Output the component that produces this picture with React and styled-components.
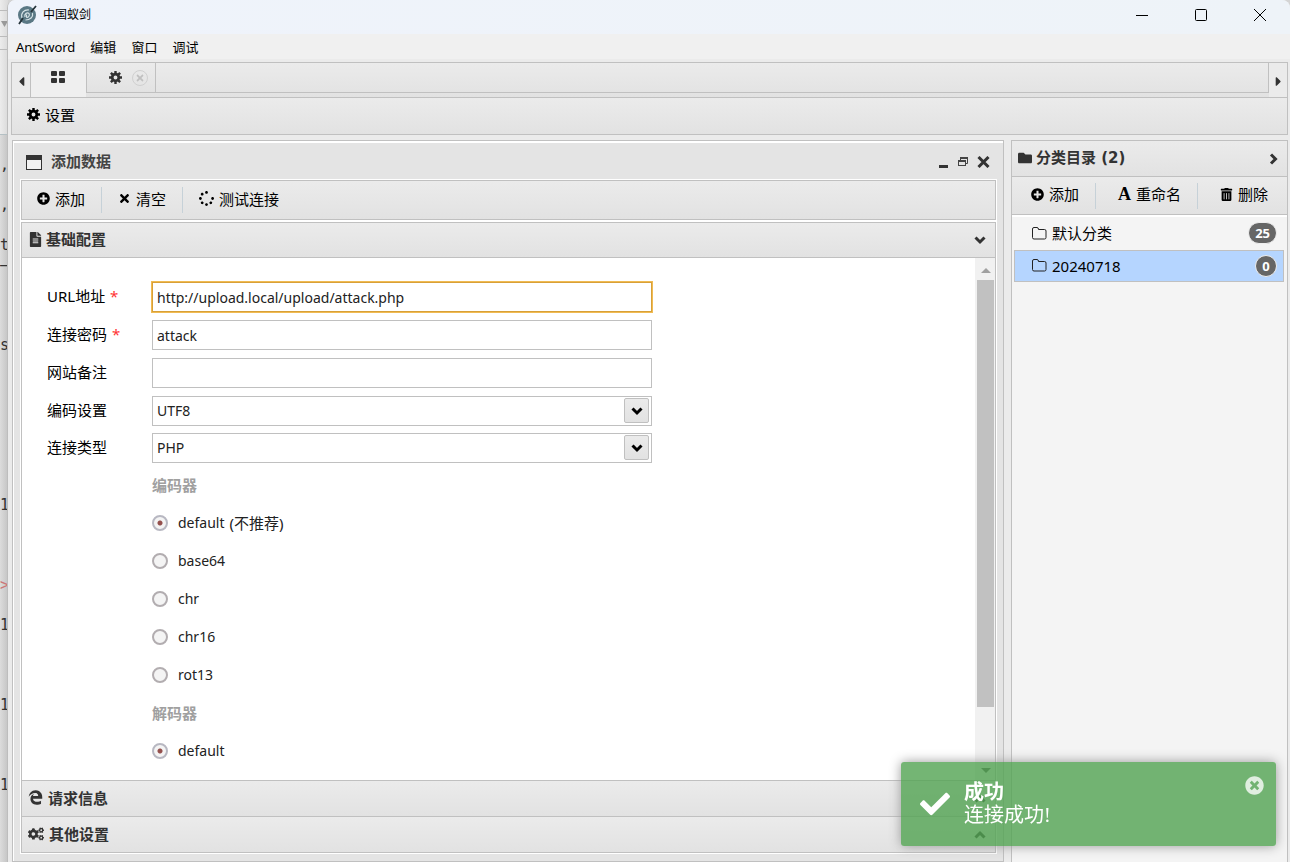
import React from "react";
import styled, { createGlobalStyle } from "styled-components";
import {
    FaCogs,
    FaPlusCircle,
    FaTimes,
    FaSpinner,
    FaFileAlt,
    FaEdgeLegacy,
    FaFolder,
    FaTrashAlt,
    FaCheck,
    FaTimesCircle,
    FaCaretLeft,
    FaCaretRight,
} from "react-icons/fa";

const line = "#c0c0c0";
const shade = "linear-gradient(#ebebeb, #e2e2e2)";

const GlobalStyle = createGlobalStyle`
    * {
        box-sizing: border-box;
    }
    body {
        margin: 0;
        font-family: "Noto Sans", "Noto Sans CJK SC", sans-serif;
        font-size: 15px;
        line-height: 20px;
        color: #000000;
    }
    button, input, select {
        font: inherit;
        color: inherit;
        margin: 0;
    }
    button {
        padding: 0;
        border: 0;
        background: none;
        display: flex;
        align-items: center;
        white-space: nowrap;
    }
    svg {
        flex: none;
    }
`;

const Screen = styled.div`
    min-height: 100vh;
    display: flex;
    background: #d4d4d4;
`;

const Behind = styled.div`
    flex: none;
    width: 8px;
    margin-right: -1px;
    overflow: hidden;
    background: linear-gradient(to right, #dcdcdc, #c4c4c4);
`;

const BehindTop = styled.div`
    height: 135px;
    border-bottom: 1px solid #b4c0c4;
    background: linear-gradient(to right, #ececec, #dadada);
`;

const BehindBar = styled.div`
    height: ${(props) => props.$height}px;
    display: flex;
    align-items: center;
    border-bottom: 1px solid #bbbbbb;
`;

const BehindText = styled.pre`
    margin: 0;
    padding-top: 20px;
    font: 15px/20px "DejaVu Sans Mono", monospace;
    color: #333333;

    i {
        color: #cc7777;
        font-style: normal;
    }
`;

const Main = styled.div`
    flex: 1;
    min-width: 0;
    display: flex;
    flex-direction: column;
    border-left: 1px solid #bdbdbd;
    background: #ebebeb;
    border-radius: 8px 8px 0 0;
    overflow: hidden;
`;

const TitleBar = styled.header`
    height: 34px;
    padding: 0 23px 4px 10px;
    display: flex;
    align-items: center;
    gap: 5px;
    background: linear-gradient(to right, #eff3fb, #eef3f8);
    font-size: 12px;
`;

const Controls = styled.div`
    margin-left: auto;
    display: flex;
    gap: 45px;
`;

const Menu = styled.nav`
    height: 25px;
    padding: 0 8px;
    display: flex;
    align-items: center;
    gap: 15px;
    background: #f0f0f0;
    font-size: 13px;
`;

const Body = styled.div`
    flex: 1;
    padding: 3px 2px 2px 3px;
    display: flex;
    flex-direction: column;
`;

const Tabs = styled.div`
    height: 35px;
    display: flex;
    border: 1px solid ${line};
    border-bottom: 0;
    background: ${shade};
    color: #333333;
`;

const Arrow = styled.button`
    width: 18px;
    padding-top: 3px;
    justify-content: center;
    background: #ebebeb;
`;

const Tab = styled.div`
    width: ${(props) => props.$width}px;
    height: ${(props) => (props.$active ? 34 : 30)}px;
    padding: ${(props) => (props.$active ? "0 2px 6px 0" : "0 0 0 14px")};
    display: flex;
    align-items: center;
    justify-content: center;
    gap: 10px;
    border: solid ${line};
    border-width: 0 0 ${(props) => (props.$active ? 0 : 1)}px 1px;
    background: ${(props) => (props.$active ? "#efefef" : shade)};
`;

const TabClose = styled.button`
    width: 16px;
    height: 16px;
    justify-content: center;
    border: 1px solid #d0d0d0;
    border-radius: 50%;
    color: #c0c0c0;
`;

const TabRest = styled.div`
    flex: 1;
    height: 30px;
    border: solid ${line};
    border-width: 0 1px 1px 1px;
`;

const Bar = styled.div`
    height: 38px;
    padding: 0 15px;
    display: flex;
    align-items: center;
    border: 1px solid ${line};
    background: ${shade};
`;

const BarButton = styled.button`
    gap: 5px;
    padding-bottom: 3px;
`;

const Columns = styled.div`
    flex: 1;
    margin: 5px 0 0 1px;
    display: flex;
    gap: 7px;
`;

const Dialog = styled.section`
    flex: 1;
    min-width: 0;
    padding: 0 7px 8px 8px;
    display: flex;
    flex-direction: column;
    border: 1px solid ${line};
    box-shadow: inset 1px 1px #ffffff, inset 0 2px #ffffff;
    background: #e4e4e4;
`;

const DialogHead = styled.header`
    height: 39px;
    padding: 1px 6px 0 5px;
    display: flex;
    align-items: center;
    gap: 9px;
    color: #444444;
    font-weight: bold;
`;

const DialogControls = styled.div`
    margin-left: auto;
    display: flex;
    align-items: center;
    gap: 8px;
    padding-top: 2px;
`;

const DialogBar = styled.div`
    height: 40px;
    padding: 0 15px;
    display: flex;
    align-items: center;
    border: 1px solid ${line};
    outline: 1px solid #ffffff;
    background: ${shade};
`;

const Divider = styled.span`
    width: 1px;
    height: 26px;
    margin: 0 ${(props) => props.$after || 16}px 0 16px;
    background: #c6d1d8;
`;

const Accordion = styled.div`
    flex: 1;
    margin-top: 2px;
    display: flex;
    flex-direction: column;
    border: 1px solid ${line};
    outline: 1px solid #ffffff;
`;

const Section = styled.button`
    width: 100%;
    height: ${(props) => props.$height}px;
    padding: 0 9px 2px 6px;
    gap: ${(props) => (props.$open ? 3 : 5)}px;
    border: solid ${line};
    border-width: ${(props) => (props.$open ? "0 0 1px" : "1px 0 0")};
    background: ${shade};
    color: #333333;
    font-weight: bold;

    svg:last-child {
        margin: 2px 0 0 auto;
    }
`;

const Content = styled.div`
    flex: 1;
    display: flex;
    background: #ffffff;
`;

const Form = styled.form`
    flex: 1;
    padding: 20px 25px 10px;
`;

const Field = styled.div`
    height: ${(props) => props.$height || 38}px;
    display: grid;
    grid-template-columns: 105px 500px;
    align-items: center;

    label {
        padding-bottom: 2px;
    }
`;

const Required = styled.span`
    margin-left: 1px;
    color: #ff3333;
`;

const TextBox = styled.input`
    width: 100%;
    height: 30px;
    padding: 0 4px;
    border: 1px solid ${line};
    outline: ${(props) => (props.$focus ? "1px solid #f0bb53" : "none")};
    border-color: ${(props) => (props.$focus ? "#d8a038" : line)};
    border-radius: 0;
    background: #ffffff;
    color: #222222;
    font-size: 14px;
`;

const SelectBox = styled.div`
    display: grid;
    align-items: center;

    > * {
        grid-area: 1 / 1;
    }
`;

const Select = styled.select`
    width: 100%;
    height: 30px;
    padding: 0 4px;
    appearance: none;
    border: 1px solid ${line};
    border-radius: 0;
    background: #ffffff;
    color: #222222;
    font-size: 14px;
`;

const SelectArrow = styled.span`
    width: 25px;
    height: 25px;
    margin-right: 3px;
    justify-self: end;
    display: flex;
    align-items: center;
    justify-content: center;
    border: 1px solid ${line};
    border-radius: 2px;
    background: ${shade};
    pointer-events: none;
`;

const GroupTitle = styled.div`
    height: 38px;
    padding-left: 105px;
    display: flex;
    align-items: center;
    color: #a0a0a0;
    font-weight: bold;
`;

const Option = styled.label`
    height: 38px;
    padding-left: 105px;
    display: flex;
    align-items: center;
    gap: 10px;
    color: #222222;
    font-size: 14px;
`;

const Note = styled.span`
    margin-left: -5px;
    font-size: 15px;
`;

const Radio = styled.input`
    width: 16px;
    height: 16px;
    appearance: none;
    border: 2px solid #b2adb0;
    border-radius: 50%;
    background: #f4f4f4;

    &:checked {
        border-color: #b8b8c2;
        background: radial-gradient(circle, #94504d 2px, #f4f4f4 3px);
    }
`;

const Scroll = styled.div`
    width: 20px;
    padding: 0 1px 0 2px;
    display: flex;
    flex-direction: column;
    align-items: center;
    background: #f1f1f1;
    color: #a0a0a0;
`;

const Thumb = styled.div`
    width: 100%;
    flex: 427;
    background: #c1c1c1;
`;

const ScrollRest = styled.div`
    flex: 51;
`;

const ScrollButton = styled.span`
    height: 22px;
    padding-top: 2px;
    display: flex;
    align-items: center;
`;

const Side = styled.aside`
    width: 277px;
    display: flex;
    flex-direction: column;
    border: solid ${line};
    border-width: 1px 1px 0;
    background: #f4f4f4;
`;

const SideHead = styled.header`
    height: 36px;
    padding: 0 8px 2px 6px;
    display: flex;
    align-items: center;
    gap: 4px;
    border-bottom: 1px solid ${line};
    background: ${shade};
    color: #333333;
    font-family: "DejaVu Sans", "Noto Sans CJK SC", sans-serif;
    font-weight: bold;

    svg:last-child {
        margin: 3px 0 0 auto;
    }
`;

const SideBar = styled.div`
    height: 38px;
    padding: 0 19px;
    display: flex;
    align-items: center;
    border-bottom: 1px solid ${line};
    background: ${shade};
`;

const LetterIcon = styled.span`
    font: bold 18px/20px "Liberation Serif", serif;
`;

const List = styled.ul`
    margin: 0;
    padding: 0 3px 0 2px;
    border-top: 2px solid #ffffff;
    list-style: none;
`;

const Item = styled.li`
    height: ${(props) => (props.$selected ? 32 : 33)}px;
    padding: 0 6px 1px 17px;
    display: flex;
    align-items: center;
    gap: 5px;
    border: 1px solid ${(props) => (props.$selected ? line : "transparent")};
    background: ${(props) => (props.$selected ? "#b5d5ff" : "transparent")};
`;

const Badge = styled.span`
    margin-left: auto;
    min-width: 22px;
    padding: 0 6px;
    border: 1px solid #eeeeee;
    border-radius: 11px;
    background: #666666;
    color: #ffffff;
    font-size: 13px;
    font-weight: bold;
    text-align: center;
`;

const Toast = styled.div`
    position: fixed;
    right: 14px;
    bottom: 16px;
    width: 375px;
    height: 84px;
    padding: 0 12px 0 19px;
    display: flex;
    align-items: center;
    gap: 14px;
    border-radius: 3px;
    background: rgba(81, 163, 81, 0.8);
    box-shadow: 0 0 12px #999999;
    color: #ffffff;
    font: 20px/23px "Liberation Serif", "Noto Sans CJK SC", serif;
`;

const ToastClose = styled.button`
    align-self: flex-start;
    margin: 14px 0 0 auto;
    color: #e0eee0;
`;

const Logo = () => (
    <svg width="20" height="20" viewBox="0 0 20 20">
        <circle cx="9" cy="10" r="9" fill="#5a7884" />
        <g fill="none" stroke="#d5e2e5" strokeWidth="1.2">
            <path d="M4 13C2.500 8 6 4.500 11 5M14.500 8c1 4-2.500 7-7 7" />
            <path d="M7 12C6 9 9 7 11 8.500C12.500 11 9.500 13 8.500 12V9.500" />
        </g>
        <path d="M1 19L5 13M13 7L18 1" stroke="#26343a" strokeWidth="1.800" />
    </svg>
);

const Gear = () => (
    <svg width="13" height="13" viewBox="0 0 14 14" stroke="currentColor" fill="none">
        <circle cx="7" cy="7" r="3.600" strokeWidth="3" />
        <path d="M7 0v3M7 11v3M0 7h3M11 7h3M2 2l2 2M10 10l2 2M12 2l-2 2M4 10l-2 2" strokeWidth="2.600" />
    </svg>
);

const Grid = () => (
    <svg width="14" height="12" fill="currentColor">
        <rect width="6" height="5" rx="1" />
        <rect x="8" width="6" height="5" rx="1" />
        <rect y="7" width="6" height="5" rx="1" />
        <rect x="8" y="7" width="6" height="5" rx="1" />
    </svg>
);

const chevrons = {
    down: "M1.500 3.500L6 8L10.500 3.500",
    up: "M1.500 8.500L6 4L10.500 8.500",
    right: "M4 1.500L8.500 6L4 10.500",
};

const Chevron = ({ to }) => (
    <svg width="12" height="12" fill="none" stroke="currentColor" strokeWidth="3">
        <path d={chevrons[to]} />
    </svg>
);

const FolderOutline = () => (
    <svg width="15" height="13" fill="none" stroke="#222222">
        <path d="M0.500 2Q0.500 0.500 2 0.500H5Q6.500 0.500 6.500 2.500H12.500Q14 2.500 14 4V10.500Q14 12 12.500 12H2Q0.500 12 0.500 10.500Z" />
    </svg>
);

const DialogIcon = () => (
    <svg width="16" height="18" viewBox="0 0 16 18">
        <rect x="0.5" y="3.5" width="15" height="14" fill="#f2f2f2" stroke="#333333" />
        <rect y="3" width="16" height="5" fill="#333333" />
    </svg>
);

const items = [
    { name: "默认分类", count: 25 },
    { name: "20240718", count: 0, selected: true },
];

const encoders = [
    { name: "default", note: "(不推荐)" },
    { name: "base64" },
    { name: "chr" },
    { name: "chr16" },
    { name: "rot13" },
];

export default function App() {
    return (
        <Screen>
            <GlobalStyle />
            <Behind>
                <BehindTop>
                    <BehindBar $height={11} />
                    <BehindBar $height={26}>
                        <svg width="8" height="8" fill="#999999"><path d="M1 1H8L4.500 7Z" /></svg>
                    </BehindBar>
                    <BehindBar $height={13} />
                </BehindTop>
                <BehindText>
                    {",\n\n,\n\nt\n—\n\n\n\ns" + "\n".repeat(8) + "1" + "\n".repeat(4)}
                    <i>&gt;</i>
                    {"\n\n1\n\n\n\n1\n\n\n\n1"}
                </BehindText>
            </Behind>
            <Main>
                <TitleBar>
                    <Logo />
                    中国蚁剑
                    <Controls>
                        <button aria-label="最小化">
                            <svg width="14" height="14" stroke="#000000">
                                <path d="M1 7.5h12" />
                            </svg>
                        </button>
                        <button aria-label="最大化">
                            <svg width="14" height="14" fill="none" stroke="#000000">
                                <rect x="1.5" y="1.5" width="11" height="11" rx="1" />
                            </svg>
                        </button>
                        <button aria-label="关闭">
                            <svg width="14" height="14" stroke="#000000">
                                <path d="M1 1l12 12M13 1L1 13" />
                            </svg>
                        </button>
                    </Controls>
                </TitleBar>
                <Menu>
                    <button>AntSword</button>
                    <button>编辑</button>
                    <button>窗口</button>
                    <button>调试</button>
                </Menu>
                <Body>
                    <Tabs>
                        <Arrow aria-label="向左"><FaCaretLeft size={15} /></Arrow>
                        <Tab $width={56} $active><Grid /></Tab>
                        <Tab $width={69}>
                            <Gear />
                            <TabClose aria-label="关闭标签"><FaTimes size={10} /></TabClose>
                        </Tab>
                        <TabRest />
                        <Arrow aria-label="向右"><FaCaretRight size={15} /></Arrow>
                    </Tabs>
                    <Bar>
                        <BarButton><Gear />设置</BarButton>
                    </Bar>
                    <Columns>
                        <Dialog>
                            <DialogHead>
                                <DialogIcon />
                                添加数据
                                <DialogControls>
                                    <button aria-label="最小化">
                                        <svg width="10" height="12">
                                            <rect y="9" width="9" height="3" fill="#333333" />
                                        </svg>
                                    </button>
                                    <button aria-label="还原">
                                        <svg width="12" height="12" fill="none" stroke="#444444">
                                            <path d="M3.5 4V2.5h7v5H9" />
                                            <path d="M3 2h8" strokeWidth="2" />
                                            <rect x="1.5" y="5.5" width="7" height="4" />
                                            <path d="M1 5h8" strokeWidth="2" />
                                        </svg>
                                    </button>
                                    <button aria-label="关闭">
                                        <svg width="13" height="12" stroke="#333333" strokeWidth="3">
                                            <path d="M1.500 1l10 10M11.500 1l-10 10" />
                                        </svg>
                                    </button>
                                </DialogControls>
                            </DialogHead>
                            <DialogBar>
                                <BarButton><FaPlusCircle size={13} />添加</BarButton>
                                <Divider />
                                <BarButton><FaTimes size={13} />清空</BarButton>
                                <Divider />
                                <BarButton><FaSpinner size={15} />测试连接</BarButton>
                            </DialogBar>
                            <Accordion>
                                <Section $open $height={35}>
                                    <FaFileAlt size={15} />
                                    基础配置
                                    <Chevron to="down" />
                                </Section>
                                <Content>
                                    <Form>
                                        <Field>
                                            <label htmlFor="url">URL地址 <Required>*</Required></label>
                                            <TextBox id="url" $focus defaultValue="http://upload.local/upload/attack.php" />
                                        </Field>
                                        <Field>
                                            <label htmlFor="pwd">连接密码 <Required>*</Required></label>
                                            <TextBox id="pwd" defaultValue="attack" />
                                        </Field>
                                        <Field>
                                            <label htmlFor="note">网站备注</label>
                                            <TextBox id="note" />
                                        </Field>
                                        <Field $height={37}>
                                            <label htmlFor="encode">编码设置</label>
                                            <SelectBox>
                                                <Select id="encode"><option>UTF8</option></Select>
                                                <SelectArrow><Chevron to="down" /></SelectArrow>
                                            </SelectBox>
                                        </Field>
                                        <Field $height={37}>
                                            <label htmlFor="type">连接类型</label>
                                            <SelectBox>
                                                <Select id="type"><option>PHP</option></Select>
                                                <SelectArrow><Chevron to="down" /></SelectArrow>
                                            </SelectBox>
                                        </Field>
                                        <GroupTitle>编码器</GroupTitle>
                                        {encoders.map(({ name, note }, i) => (
                                            <Option key={name}>
                                                <Radio type="radio" name="encoder" defaultChecked={i === 0} />
                                                {name}
                                                {note && <Note>{note}</Note>}
                                            </Option>
                                        ))}
                                        <GroupTitle>解码器</GroupTitle>
                                        <Option>
                                            <Radio type="radio" name="decoder" defaultChecked />
                                            default
                                        </Option>
                                    </Form>
                                    <Scroll>
                                        <ScrollButton>
                                            <svg width="10" height="5" fill="currentColor"><path d="M0 5L5 0L10 5Z" /></svg>
                                        </ScrollButton>
                                        <Thumb />
                                        <ScrollRest />
                                        <ScrollButton>
                                            <svg width="10" height="5" fill="#505050"><path d="M0 0L5 5L10 0Z" /></svg>
                                        </ScrollButton>
                                    </Scroll>
                                </Content>
                                <Section $height={36}>
                                    <FaEdgeLegacy size={15} />
                                    请求信息
                                    <Chevron to="up" />
                                </Section>
                                <Section $height={36}>
                                    <FaCogs size={16} />
                                    其他设置
                                    <Chevron to="up" />
                                </Section>
                            </Accordion>
                        </Dialog>
                        <Side>
                            <SideHead>
                                <FaFolder size={14} />
                                分类目录 (2)
                                <Chevron to="right" />
                            </SideHead>
                            <SideBar>
                                <BarButton><FaPlusCircle size={13} />添加</BarButton>
                                <Divider $after={22} />
                                <BarButton><LetterIcon aria-hidden="true">A</LetterIcon>重命名</BarButton>
                                <Divider $after={22} />
                                <BarButton><FaTrashAlt size={13} />删除</BarButton>
                            </SideBar>
                            <List>
                                {items.map((item) => (
                                    <Item key={item.name} $selected={item.selected}>
                                        <FolderOutline />
                                        {item.name}
                                        <Badge>{item.count}</Badge>
                                    </Item>
                                ))}
                            </List>
                        </Side>
                    </Columns>
                </Body>
            </Main>
            <Toast role="alert">
                <FaCheck size={30} />
                <div>
                    <b>成功</b>
                    <div>连接成功!</div>
                </div>
                <ToastClose aria-label="关闭提示"><FaTimesCircle size={19} /></ToastClose>
            </Toast>
        </Screen>
    );
}
